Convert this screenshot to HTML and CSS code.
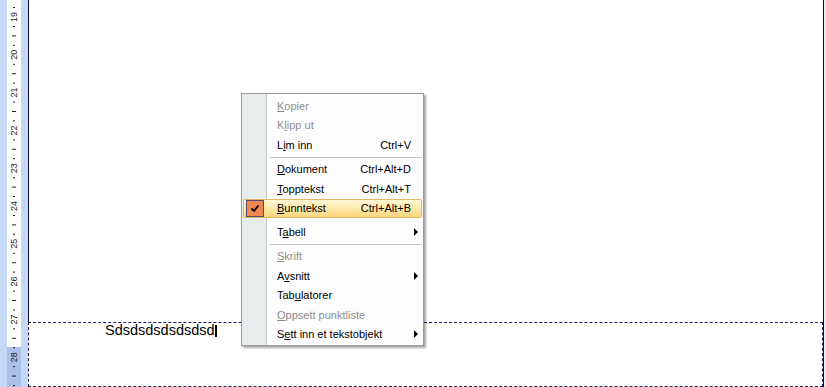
FILE: index.html
```html
<!DOCTYPE html>
<html lang="nb">
<head>
    <meta charset="UTF-8">
    <meta name="viewport" content="width=device-width, initial-scale=1.0">
    <title>Bunntekst</title>
    <link rel="stylesheet" href="styles.css">
</head>
<body>
    <div class="window">
        <div class="ruler">
            <div class="ruler-edge"></div>
            <svg class="ruler-scale" width="14" height="387" viewBox="0 0 14 387">
                <defs>
                    <g id="cm">
                        <rect x="6" y="9" width="2" height="1"></rect>
                        <rect x="5" y="18.4" width="4" height="1"></rect>
                        <rect x="6" y="27.8" width="2" height="1"></rect>
                    </g>
                </defs>
                <rect x="0" y="0" width="14" height="347" fill="#ffffff"></rect>
                <rect x="0" y="347" width="14" height="40" fill="#a9c0e8"></rect>
                <g fill="#222">
                    <use href="#cm" y="-20.8"></use>
                    <use href="#cm" y="17"></use>
                    <use href="#cm" y="54.8"></use>
                    <use href="#cm" y="92.6"></use>
                    <use href="#cm" y="130.4"></use>
                    <use href="#cm" y="168.2"></use>
                    <use href="#cm" y="206"></use>
                    <use href="#cm" y="243.8"></use>
                    <use href="#cm" y="281.6"></use>
                    <use href="#cm" y="319.4"></use>
                    <use href="#cm" y="357.2"></use>
                </g>
                <g class="ruler-nums">
                    <text x="7" y="17" transform="rotate(-90 7 17)">19</text>
                    <text x="7" y="54.8" transform="rotate(-90 7 54.8)">20</text>
                    <text x="7" y="92.6" transform="rotate(-90 7 92.6)">21</text>
                    <text x="7" y="130.4" transform="rotate(-90 7 130.4)">22</text>
                    <text x="7" y="168.2" transform="rotate(-90 7 168.2)">23</text>
                    <text x="7" y="206" transform="rotate(-90 7 206)">24</text>
                    <text x="7" y="243.8" transform="rotate(-90 7 243.8)">25</text>
                    <text x="7" y="281.6" transform="rotate(-90 7 281.6)">26</text>
                    <text x="7" y="319.4" transform="rotate(-90 7 319.4)">27</text>
                    <text x="7" y="357.2" transform="rotate(-90 7 357.2)">28</text>
                </g>
            </svg>
            <div class="ruler-edge"></div>
        </div>

        <div class="page">
            <div class="page-body"></div>
            <div class="footer">
                <span class="footer-text">Sdsdsdsdsdsdsd</span><span class="caret"></span>
            </div>
        </div>

        <div class="side"></div>

        <div class="menu">
            <div class="menu-item disabled"><span class="slot"></span><span class="label"><u>K</u>opier</span></div>
            <div class="menu-item disabled"><span class="slot"></span><span class="label">K<u>l</u>ipp ut</span></div>
            <div class="menu-item"><span class="slot"></span><span class="label">L<u>i</u>m inn</span><span class="shortcut">Ctrl+V</span></div>
            <div class="menu-sep"></div>
            <div class="menu-item"><span class="slot"></span><span class="label"><u>D</u>okument</span><span class="shortcut">Ctrl+Alt+D</span></div>
            <div class="menu-item"><span class="slot"></span><span class="label"><u>T</u>opptekst</span><span class="shortcut">Ctrl+Alt+T</span></div>
            <div class="menu-item active">
                <span class="slot">
                    <span class="check">
                        <svg width="16" height="15" viewBox="0 0 16 15"><path d="M4.5 7.5 L7 10 L11.5 4.5" fill="none" stroke="#000" stroke-width="1.8"/></svg>
                    </span>
                </span>
                <span class="label"><u>B</u>unntekst</span><span class="shortcut">Ctrl+Alt+B</span>
            </div>
            <div class="menu-gap"></div>
            <div class="menu-item"><span class="slot"></span><span class="label">T<u>a</u>bell</span><span class="arrow"></span></div>
            <div class="menu-sep"></div>
            <div class="menu-item disabled"><span class="slot"></span><span class="label"><u>S</u>krift</span></div>
            <div class="menu-item"><span class="slot"></span><span class="label">A<u>v</u>snitt</span><span class="arrow"></span></div>
            <div class="menu-item"><span class="slot"></span><span class="label">Tab<u>u</u>latorer</span></div>
            <div class="menu-item disabled"><span class="slot"></span><span class="label"><u>O</u>ppsett punktliste</span></div>
            <div class="menu-item"><span class="slot"></span><span class="label">S<u>e</u>tt inn et tekstobjekt</span><span class="arrow"></span></div>
        </div>
    </div>
</body>
</html>
```

FILE: styles.css
```css
* {
    margin: 0;
    padding: 0;
    box-sizing: border-box;
}

body {
    width: 826px;
    height: 387px;
    overflow: hidden;
    background: #ffffff;
    font-family: "Liberation Sans", Arial, sans-serif;
}

.window {
    position: relative;
    display: flex;
    width: 826px;
    height: 387px;
}

/* vertical ruler */
.ruler {
    display: flex;
    width: 28px;
    height: 387px;
    flex: none;
}

.ruler-edge {
    width: 7px;
    background: #c5d9f6;
}

.ruler-scale {
    display: block;
    flex: none;
}

.ruler-nums text {
    font-family: "Liberation Sans", Arial, sans-serif;
    font-size: 9px;
    fill: #222;
    text-anchor: middle;
    dominant-baseline: central;
}

/* page */
.page {
    display: flex;
    flex-direction: column;
    width: 796px;
    flex: none;
    border-right: 1px solid #0b0b2c;
}

.page-body {
    height: 322px;
    border-left: 1px solid #0b0b2c;
    background: #ffffff;
}

.footer {
    display: flex;
    align-items: flex-start;
    height: 65px;
    padding-left: 76px;
    border: 1px dashed #1c1c5c;
    background: #fffffd;
}

.footer-text {
    font-size: 14.5px;
    line-height: 14px;
    color: #000;
}

.caret {
    width: 2px;
    height: 12px;
    margin-top: 2px;
    background: #000;
}

.side {
    flex: 1;
    background: #ececec;
}

/* context menu */
.menu {
    position: absolute;
    left: 241px;
    top: 93px;
    width: 183px;
    padding: 2px 0 1px;
    border: 1px solid #9a9a9a;
    background: linear-gradient(to right, #e7eded 0, #e7eded 24px, #c6caca 24px, #c6caca 25px, #fdfdfd 25px);
    box-shadow: 2px 2px 2px rgba(0, 0, 0, 0.35);
    font-size: 11px;
    color: #000;
}

.menu-item {
    display: flex;
    align-items: center;
    height: 19.5px;
    padding-right: 5px;
    white-space: nowrap;
}

.menu-item.disabled {
    color: #8d8d8d;
}

.slot {
    display: flex;
    align-items: center;
    width: 24px;
    height: 100%;
    flex: none;
}

.label {
    flex: 1;
    margin-left: 11px;
}

.shortcut {
    margin-right: 7px;
}

.arrow {
    width: 0;
    height: 0;
    border-left: 4px solid #000;
    border-top: 4px solid transparent;
    border-bottom: 4px solid transparent;
}

.menu-item.active {
    margin: 0 1px;
    padding-right: 3px;
    border: 1px solid #e4b95e;
    border-radius: 2px;
    background: linear-gradient(#fff7d6, #fee9a8 50%, #fbd47c);
}

.menu-item.active .slot {
    width: 22px;
}

.check {
    display: flex;
    align-items: center;
    justify-content: center;
    width: 18px;
    height: 17px;
    margin-left: 2px;
    border: 1px solid #4e4e72;
    background: #f08852;
}

.check svg {
    display: block;
}

.menu-sep {
    height: 1px;
    margin: 2px 1px 2px 28px;
    background: #c5c5c5;
}

.menu-gap {
    height: 4px;
}
```
